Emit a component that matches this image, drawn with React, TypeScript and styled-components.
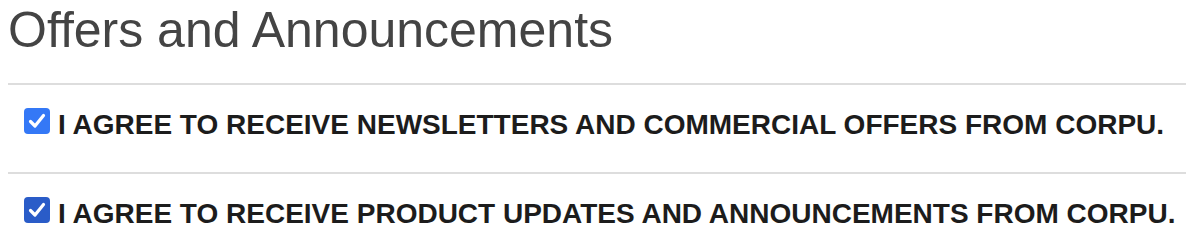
import React from "react";
import styled, { createGlobalStyle } from "styled-components";

const GlobalStyle = createGlobalStyle`
  html, body {
    margin: 0;
    padding: 0;
    background: #ffffff;
    font-family: "Liberation Sans", Arial, sans-serif;
  }
`;

const Section = styled.section`
  padding: 0 0 0 8px;
`;

const Title = styled.h2`
  margin: 2px 0 25px;
  font-size: 50px;
  font-weight: 400;
  line-height: 56px;
  color: #444444;
`;

const Divider = styled.hr`
  margin: 0;
  border: 0;
  height: 2px;
  background: #dddddd;
`;

const OptionRow = styled.label`
  display: flex;
  align-items: flex-start;
  gap: 8px;
  padding: 23px 0 34px 16px;
  cursor: pointer;

  &:last-child {
    padding-bottom: 14px;
  }
`;

const Box = styled.span<{ $tone: string }>`
  flex: none;
  width: 26px;
  height: 26px;
  border-radius: 4px;
  background: ${(p) => p.$tone};
  display: flex;
  align-items: center;
  justify-content: center;
`;

const OptionText = styled.span`
  font-size: 28px;
  font-weight: 700;
  line-height: 26px;
  color: #1c1c1c;
  text-transform: uppercase;
  padding-top: 4px;
  white-space: nowrap;
`;

const Check = () => (
  <svg width="20" height="20" viewBox="0 0 20 20">
    <path
      d="M3.5 10.5 L8 15 L16.5 4.5"
      fill="none"
      stroke="#ffffff"
      strokeWidth="3.2"
      strokeLinecap="round"
      strokeLinejoin="round"
    />
  </svg>
);

const options = [
  {
    text: "I agree to receive newsletters and commercial offers from Corpu.",
    tone: "#3478f6",
  },
  {
    text: "I agree to receive product updates and announcements from Corpu.",
    tone: "#2a5cc8",
  },
];

export default function App() {
  return (
    <>
      <GlobalStyle />
      <Section>
        <Title>Offers and Announcements</Title>
        {options.map((o, i) => (
          <React.Fragment key={i}>
            <Divider />
            <OptionRow>
              <Box $tone={o.tone}>
                <Check />
              </Box>
              <OptionText>{o.text}</OptionText>
            </OptionRow>
          </React.Fragment>
        ))}
      </Section>
    </>
  );
}
